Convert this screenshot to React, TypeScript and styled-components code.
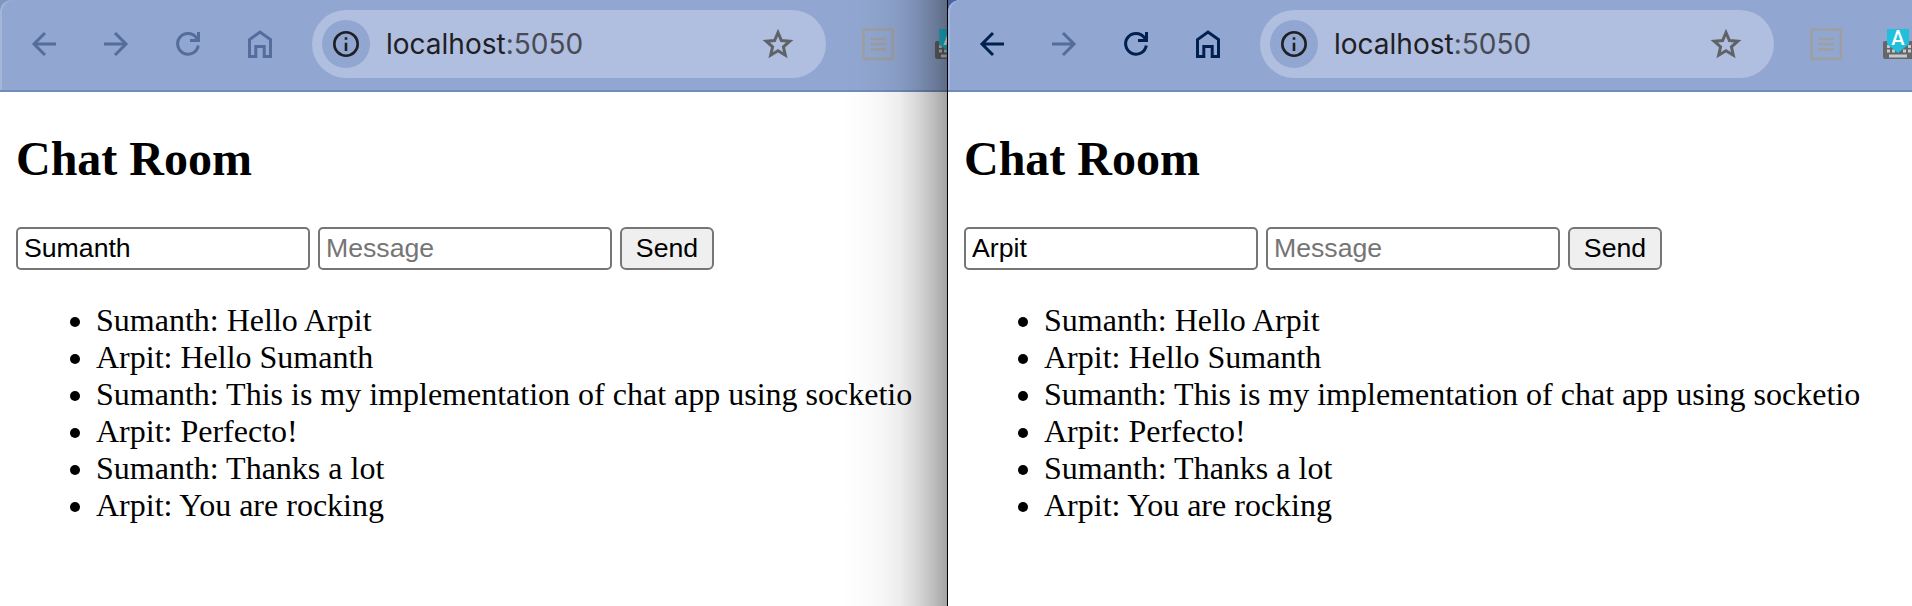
import React from 'react';
import styled, { createGlobalStyle } from 'styled-components';

const GlobalStyle = createGlobalStyle`
  * { box-sizing: border-box; }
  body { margin: 0; background: #fff; }
`;

const Desktop = styled.main`
  display: flex;
  width: 1912px;
  height: 606px;
  overflow: hidden;
`;

const BrowserWindow = styled.section<{ $width: number; $corner: string; $edge: string }>`
  position: relative;
  flex: none;
  width: ${p => p.$width}px;
  height: 606px;
  overflow: hidden;
  background: linear-gradient(${p => p.$corner}, ${p => p.$corner}) 0 0 / 12px 12px no-repeat #fff;
  --edge: ${p => p.$edge};
`;

const Divider = styled.div`
  flex: none;
  width: 1px;
  background: #000;
`;

const Shade = styled.div`
  position: absolute;
  top: 0;
  right: 0;
  bottom: 0;
  width: 105px;
  background: linear-gradient(to right, rgba(0,0,0,0) 0%, rgba(0,0,0,0.01) 18%, rgba(0,0,0,0.03) 36%, rgba(0,0,0,0.07) 55%, rgba(0,0,0,0.16) 73%, rgba(0,0,0,0.27) 89%, rgba(0,0,0,0.36) 100%);
`;

const Toolbar = styled.header`
  display: flex;
  align-items: center;
  width: 980px;
  height: 92px;
  padding: 0 0 2px 24px;
  border-bottom: 2px solid #708cba;
  border-radius: 12px 0 0 0;
  background: #91a7d1;
  box-shadow: inset 2px 0 0 var(--edge);
`;

const NavButtons = styled.nav`
  display: flex;
  gap: 32px;
  margin-right: 32px;
`;

const NavIcon = styled.svg<{ $active: boolean }>`
  display: block;
  width: 40px;
  height: 40px;
  fill: none;
  stroke: ${p => (p.$active ? '#00204f' : '#556d9c')};
  stroke-width: 3;
`;

const AddressBar = styled.div`
  display: flex;
  align-items: center;
  width: 514px;
  height: 68px;
  padding: 0 24px 0 10px;
  border-radius: 34px;
  background: #b0bedf;
`;

const InfoBadge = styled.span`
  display: flex;
  align-items: center;
  justify-content: center;
  width: 48px;
  height: 48px;
  margin-right: 16px;
  border-radius: 50%;
  background: #91a7d1;
`;

const Url = styled.span`
  flex: 1;
  color: #1f2023;
  font: 400 28px/40px Inter, sans-serif;
`;

const Port = styled.span`
  color: #474b55;
`;

const Extensions = styled.div`
  display: flex;
  gap: 40px;
  margin-left: 35px;
`;

const Page = styled.div`
  padding: 0 16px;
  color: #000;
  font: 32px/37px "Liberation Serif", serif;
`;

const Title = styled.h2`
  margin: 39px 0 41px;
  font-size: 48px;
  line-height: 55px;
`;

const Form = styled.form`
  display: flex;
  gap: 8px;
`;

const Field = styled.input`
  width: 294px;
  height: 43px;
  padding: 0 6px 1px;
  border: 2px solid #767676;
  border-radius: 5px;
  background: #fff;
  color: #000;
  font: 26.667px "Liberation Sans", sans-serif;
  &::placeholder { color: #757575; }
`;

const SendButton = styled.button`
  width: 94px;
  height: 43px;
  padding: 0 0 1px;
  border: 2px solid #767676;
  border-radius: 6px;
  background: #efefef;
  color: #000;
  font: 26.667px "Liberation Sans", sans-serif;
`;

const Messages = styled.ul`
  margin: 32px 0;
  padding-left: 80px;
  white-space: nowrap;
`;

const BackIcon = ({ active }: { active: boolean }) => (
  <NavIcon $active={active} viewBox="0 0 40 40">
    <path d="M32 20H10M21 9L10 20L21 31" />
  </NavIcon>
);

const ForwardIcon = ({ active }: { active: boolean }) => (
  <NavIcon $active={active} viewBox="0 0 40 40">
    <path d="M8 20H30M19 9L30 20L19 31" />
  </NavIcon>
);

const ReloadIcon = ({ active }: { active: boolean }) => (
  <NavIcon $active={active} viewBox="0 0 40 40">
    <path d="M30.3 21.5A10.4 10.4 0 1 1 28.4 13.6L30 16.5M30.5 8V16.5H22" />
  </NavIcon>
);

const HomeIcon = ({ active }: { active: boolean }) => (
  <NavIcon $active={active} viewBox="0 0 40 40">
    <path d="M9.5 15.6L20 8L30.5 15.6V32.5H24.2V22.5H15.8V32.5H9.5Z" />
  </NavIcon>
);

const InfoIcon = () => (
  <svg width="28" height="28" viewBox="0 0 28 28" fill="none" stroke="#1f2023">
    <circle cx="14" cy="14" r="11.7" strokeWidth="2.6" />
    <path d="M14 12.7V21M14 7.2V9.8" strokeWidth="2.6" />
  </svg>
);

const StarIcon = () => (
  <svg width="48" height="40" viewBox="0 0 48 40" fill="none" stroke="#5f6368" strokeWidth="3">
    <path d="M24 8.5L27.4 16.5L35.8 17.2L29.4 22.8L31.3 31.2L24 26.8L16.7 31.2L18.6 22.8L12.2 17.2L20.6 16.5Z" />
  </svg>
);

const ReaderIcon = () => (
  <svg width="34" height="34" viewBox="0 0 34 34" fill="none" stroke="#9e9fa2" strokeWidth="2.7" strokeLinejoin="round" strokeLinecap="round">
    <rect x="2.5" y="2.5" width="29.4" height="29.4" />
    <path d="M10.5 12H24M10.5 17.2H24M10.5 22.4H24" />
  </svg>
);

const KeyLabel = styled.text`
  fill: #fff;
  font: 500 20px Roboto, sans-serif;
  text-anchor: middle;
`;

const KeyboardIcon = () => (
  <svg width="34" height="34" viewBox="0 0 34 34">
    <rect x="0" y="14" width="32" height="18" rx="2" fill="#646668" />
    <g fill="#c5c9d0">
      <path d="M4 18h3v3h-3zM4 22.5h3v3h-3zM9 22.5h3v3h-3zM20 22.5h3v3h-3zM25 18h3v3h-3zM25 22.5h3v3h-3z" />
      <path d="M6 27.5h18v3h-18z" />
    </g>
    <path d="M4 2H26V17L15 26L4 17Z" fill="#20bfdb" />
    <KeyLabel x="14.8" y="18.2">A</KeyLabel>
  </svg>
);

const MESSAGES = [
  'Sumanth: Hello Arpit',
  'Arpit: Hello Sumanth',
  'Sumanth: This is my implementation of chat app using socketio',
  'Arpit: Perfecto!',
  'Sumanth: Thanks a lot',
  'Arpit: You are rocking',
];

interface ChatWindowProps {
  user: string;
  focused: boolean;
  width: number;
}

const ChatWindow = ({ user, focused, width }: ChatWindowProps) => (
  <BrowserWindow $width={width} $corner={focused ? '#4a659f' : '#8096bf'} $edge={focused ? '#a2b5dc' : '#a5b5d8'}>
    <Toolbar>
      <NavButtons>
        <BackIcon active={focused} />
        <ForwardIcon active={false} />
        <ReloadIcon active={focused} />
        <HomeIcon active={focused} />
      </NavButtons>
      <AddressBar>
        <InfoBadge><InfoIcon /></InfoBadge>
        <Url>localhost<Port>:5050</Port></Url>
        <StarIcon />
      </AddressBar>
      <Extensions>
        <ReaderIcon />
        <KeyboardIcon />
      </Extensions>
    </Toolbar>
    <Page>
      <Title>Chat Room</Title>
      <Form onSubmit={e => e.preventDefault()}>
        <Field defaultValue={user} />
        <Field placeholder="Message" />
        <SendButton>Send</SendButton>
      </Form>
      <Messages>
        {MESSAGES.map(m => <li key={m}>{m}</li>)}
      </Messages>
    </Page>
    {!focused && <Shade />}
  </BrowserWindow>
);

export default function App() {
  return (
    <>
      <GlobalStyle />
      <Desktop>
        <ChatWindow user="Sumanth" focused={false} width={947} />
        <Divider />
        <ChatWindow user="Arpit" focused width={964} />
      </Desktop>
    </>
  );
}
